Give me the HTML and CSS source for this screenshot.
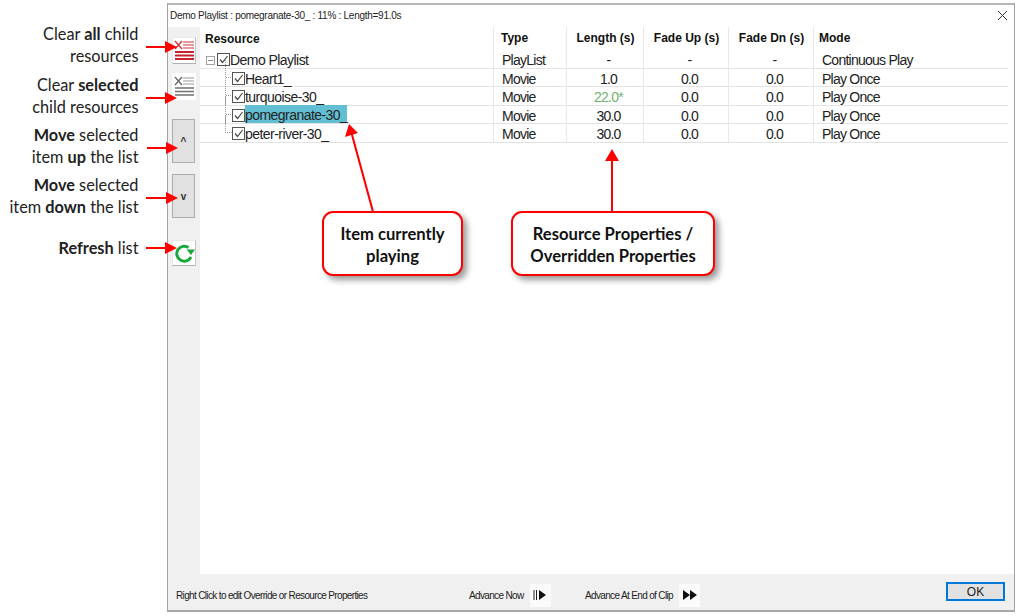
FILE: index.html
```html
<!DOCTYPE html>
<html lang="en">
<head>
<meta charset="utf-8">
<title>Demo Playlist</title>
<link rel="stylesheet" href="styles.css">
</head>
<body>
<svg class="defs" width="0" height="0" aria-hidden="true">
  <symbol id="check" viewBox="0 0 13 13">
    <rect x="0.5" y="0.5" width="12" height="12" fill="#fff" stroke="#555"/>
    <path d="M3 6.5 L5.5 9.5 L10.5 3" fill="none" stroke="#444" stroke-width="1.2"/>
  </symbol>
</svg>
<div class="page">
  <aside class="notes">
    <p class="note n1">Clear <b>all</b> child<br>resources</p>
    <p class="note n2">Clear <b>selected</b><br>child resources</p>
    <p class="note n3"><b>Move</b> selected<br>item <b>up</b> the list</p>
    <p class="note n4"><b>Move</b> selected<br>item <b>down</b> the list</p>
    <p class="note n5"><b>Refresh</b> list</p>
  </aside>
  <main class="window">
    <header class="titlebar">
      <span class="title">Demo Playlist : pomegranate-30_ : 11% : Length=91.0s</span>
      <svg class="close" width="11" height="11" viewBox="0 0 11 11"><path d="M1 1 L10 10 M10 1 L1 10" stroke="#333" stroke-width="1" fill="none"/></svg>
    </header>
    <div class="body">
      <nav class="toolbar">
        <button class="tool icon raised t1">
          <svg width="22" height="24" viewBox="0 0 22 24">
            <path d="M2 2 L9 10 M9 2 L2 10" stroke="#d8323c" stroke-width="1.4" fill="none"/>
            <path d="M10 3 H21 M10 6 H21 M10 9 H21" stroke="#d8323c" stroke-width="1.2" fill="none"/>
            <path d="M2 13 H21 M2 16.500 H21 M2 20 H21" stroke="#c8232d" stroke-width="1.8" fill="none"/>
          </svg>
        </button>
        <button class="tool icon t2">
          <svg width="22" height="24" viewBox="0 0 22 24">
            <path d="M2 2 L9 10 M9 2 L2 10" stroke="#666" stroke-width="1.3" fill="none"/>
            <path d="M10 3 H21 M10 6 H21 M10 9 H21" stroke="#999" stroke-width="1.2" fill="none"/>
            <path d="M2 13 H21 M2 16.500 H21 M2 20 H21" stroke="#707070" stroke-width="1.6" fill="none"/>
          </svg>
        </button>
        <button class="tool move t3">^</button>
        <button class="tool move t4">v</button>
        <button class="tool icon raised t5">
          <svg width="22" height="22" viewBox="0 0 22 22">
            <path d="M18 15 A7.500 7.500 0 1 1 15.500 5.500" fill="none" stroke="#18a83c" stroke-width="3"/>
            <path d="M13.500 7.500 L22 7.500 L18 13 Z" fill="#18a83c"/>
          </svg>
        </button>
      </nav>
      <section class="list">
        <div class="row head">
          <div class="cell first">Resource</div>
          <div class="cell type">Type</div>
          <div class="cell num">Length (s)</div>
          <div class="cell num">Fade Up (s)</div>
          <div class="cell num">Fade Dn (s)</div>
          <div class="cell mode">Mode</div>
        </div>
        <div class="row r0">
          <div class="cell first root">
            <span class="expander"></span>
            <svg class="cb" width="13" height="13"><use href="#check"/></svg><span class="label">Demo Playlist</span>
          </div>
          <div class="cell type">PlayList</div>
          <div class="cell num">-</div>
          <div class="cell num">-</div>
          <div class="cell num">-</div>
          <div class="cell mode">Continuous Play</div>
        </div>
        <div class="row">
          <div class="cell first child">
            <span class="branch"></span>
            <svg class="cb" width="13" height="13"><use href="#check"/></svg><span class="label">Heart1_</span>
          </div>
          <div class="cell type">Movie</div>
          <div class="cell num">1.0</div>
          <div class="cell num">0.0</div>
          <div class="cell num">0.0</div>
          <div class="cell mode">Play Once</div>
        </div>
        <div class="row">
          <div class="cell first child">
            <span class="branch"></span>
            <svg class="cb" width="13" height="13"><use href="#check"/></svg><span class="label">turquoise-30_</span>
          </div>
          <div class="cell type">Movie</div>
          <div class="cell num override">22.0*</div>
          <div class="cell num">0.0</div>
          <div class="cell num">0.0</div>
          <div class="cell mode">Play Once</div>
        </div>
        <div class="row">
          <div class="cell first child">
            <span class="branch"></span>
            <svg class="cb" width="13" height="13"><use href="#check"/></svg><span class="label playing">pomegranate-30_</span>
          </div>
          <div class="cell type">Movie</div>
          <div class="cell num">30.0</div>
          <div class="cell num">0.0</div>
          <div class="cell num">0.0</div>
          <div class="cell mode">Play Once</div>
        </div>
        <div class="row">
          <div class="cell first child last">
            <span class="branch"></span>
            <svg class="cb" width="13" height="13"><use href="#check"/></svg><span class="label">peter-river-30_</span>
          </div>
          <div class="cell type">Movie</div>
          <div class="cell num">30.0</div>
          <div class="cell num">0.0</div>
          <div class="cell num">0.0</div>
          <div class="cell mode">Play Once</div>
        </div>
      </section>
    </div>
    <footer class="footer">
      <span class="hint">Right Click to edit Override or Resource Properties</span>
      <div class="advance a1">
        <span>Advance Now</span>
        <button class="adv">
          <svg width="14" height="10" viewBox="0 0 14 10"><path d="M1 0 V10 M3.500 0 V10" stroke="#222" stroke-width="1"/><path d="M6 0 L13 5 L6 10 Z" fill="#111"/></svg>
        </button>
      </div>
      <div class="advance a2">
        <span>Advance At End of Clip</span>
        <button class="adv">
          <svg width="14" height="10" viewBox="0 0 14 10"><path d="M0 0 L7 5 L0 10 Z M7 0 L14 5 L7 10 Z" fill="#111"/></svg>
        </button>
      </div>
      <button class="ok">OK</button>
    </footer>
  </main>
  <div class="callout c1">Item currently<br>playing</div>
  <div class="callout c2">Resource Properties /<br>Overridden Properties</div>
  <svg class="arrows" width="1020" height="616" viewBox="0 0 1020 616" aria-hidden="true">
    <g fill="#f00" stroke="none">
      <path d="M146 46 H165 V41 L177 47 L165 53 V48 H146 Z"/>
      <path d="M146 97 H165 V92 L177 98 L165 104 V99 H146 Z"/>
      <path d="M147 147 H166 V142 L178 148 L166 154 V149 H147 Z"/>
      <path d="M146 197 H166 V192 L178 198 L166 204 V199 H146 Z"/>
      <path d="M146 247 H165 V242 L177 248 L165 254 V249 H146 Z"/>
      <path d="M372 212 L351 135 L345 137 L349 124 L358 133 L353 134.500 L374 211.500 Z"/>
      <path d="M611 212 V161 H605 L612 149 L619 161 H613 V212 Z"/>
    </g>
  </svg>
</div>
</body>
</html>
```
FILE: styles.css
```css
* { box-sizing: border-box; }
html, body { margin: 0; padding: 0; background: #fff; }
body { width: 1020px; height: 616px; overflow: hidden; font-family: "Liberation Sans", Arial, sans-serif; }
.defs { position: absolute; }
.page { position: relative; width: 1020px; height: 616px; display: flex; align-items: flex-start; }

.notes { width: 167px; flex: none; padding-top: 23px; display: flex; flex-direction: column; }
.note { margin: 0; padding-right: 28.500px; text-align: right; font: 16.300px/21.500px Lato, "Open Sans", sans-serif; color: #222; }
.note b { font-weight: 700; }
.n2 { margin-top: 8px; }
.n3 { margin-top: 7px; }
.n4 { margin-top: 7px; }
.n5 { margin-top: 20px; }

.window { width: 848px; height: 609px; margin-top: 3px; flex: none; display: flex; flex-direction: column; background: #f0f0f0; border: 1px solid #a3a3a3; border-top: 2px solid #b5b5b5; border-bottom: 2px solid #a8a8a8; }
.titlebar { height: 22px; flex: none; background: #fff; display: flex; align-items: center; justify-content: space-between; padding: 0 6px 2px 2px; }
.title { font-size: 10px; letter-spacing: -0.270px; color: #222; }

.body { flex: 1; min-height: 0; display: flex; }
.toolbar { width: 32px; flex: none; padding: 10px 0 0 4px; display: flex; flex-direction: column; align-items: flex-start; }
.tool { padding: 0; margin: 0; display: flex; align-items: center; justify-content: center; font-family: "Liberation Sans", sans-serif; }
.icon { background: #fff; border: 0; }
.raised { border-right: 1px solid #c4c4c4; border-bottom: 1px solid #b0b0b0; border-top: 1px solid #e8e8e8; border-left: 1px solid #e8e8e8; }
.t1 { width: 24px; height: 27px; }
.t2 { width: 24px; height: 27px; margin-top: 9px; }
.move { width: 23px; height: 44px; background: #e1e1e1; border: 1px solid #adadad; font-size: 10px; font-weight: 700; color: #333; }
.t3 { margin-top: 19px; }
.t4 { margin-top: 11px; }
.t5 { width: 24px; height: 26px; margin-top: 22px; }

.list { flex: 1; background: #fff; }
.row { display: grid; grid-template-columns: 294px 73px 77px 85px 85px 194px; grid-template-rows: minmax(0, 1fr); width: 808px; height: 18.400px; font-size: 14px; letter-spacing: -0.750px; color: #222; border-bottom: 1px solid #e3e3e3; line-height: 20.400px; }
.head { height: 23px; font-size: 12px; letter-spacing: 0; font-weight: 700; color: #111; border-bottom: 0; line-height: 22px; }
.row.r0 { height: 19px; }
.cell { border-right: 1px solid #e8e8e8; white-space: nowrap; }
.cell:last-child { border-right: 0; }
.num { text-align: center; padding-left: 7px; }
.head .num { padding-left: 1px; }
.type { padding-left: 8px; }
.mode { padding-left: 8px; }
.head .type { padding-left: 7px; }
.head .mode { padding-left: 5px; }
.head .first { padding-left: 5px; }
.first { display: flex; align-items: center; }
.root { padding-left: 6px; }
.child { padding-left: 25px; position: relative; }
.expander { width: 9px; height: 9px; border: 1px solid #a0a0a0; margin: 2px 2px 0 0; flex: none; background: linear-gradient(#888, #888) center / 5px 1px no-repeat; }
.branch { position: absolute; left: 25px; top: -9px; width: 7px; height: 18px; border-left: 1px dotted #999; border-bottom: 1px dotted #999; }
.child:not(.last) .branch { height: 27px; border-bottom: 0; background: linear-gradient(to right, #999 50%, transparent 50%) 0 17px / 2px 1px repeat-x; }
.cb { flex: none; margin-top: 1.800px; }
.child .cb { margin-left: 7px; }
.label { padding-top: 2.500px; letter-spacing: -0.550px; }
.playing { background: #62bed2; height: 18px; padding-top: 0; }
.override { color: #6fb36f; }

.footer { height: 36px; flex: none; display: flex; align-items: center; padding-top: 6px; font-size: 10px; letter-spacing: -0.650px; color: #222; }
.hint { margin-left: 8px; width: 293px; flex: none; }
.advance { display: flex; align-items: center; gap: 6px; }
.a1 { width: 116px; flex: none; }
.a2 { flex: none; }
.adv { width: 21px; height: 23px; padding: 0; border: 0; background: #fbfbfb; display: flex; align-items: center; justify-content: center; }
.ok { width: 59px; height: 19px; padding: 0; background: #e1e1e1; border: 2px solid #0078d7; font: 12px "Liberation Sans", sans-serif; color: #222; margin: -7px 9px 0 auto; }

.callout { position: absolute; top: 211px; height: 65px; padding-top: 2px; display: flex; align-items: center; justify-content: center; text-align: center; background: #fff; border: 2.500px solid #f00; border-radius: 11px; box-shadow: 4px 4px 6px rgba(0, 0, 0, 0.4); font: 700 16.600px/22px Lato, "Open Sans", sans-serif; color: #111; }
.c1 { left: 322px; width: 141px; }
.c2 { left: 511px; width: 204px; }
.arrows { position: absolute; left: 0; top: 0; pointer-events: none; }
```
